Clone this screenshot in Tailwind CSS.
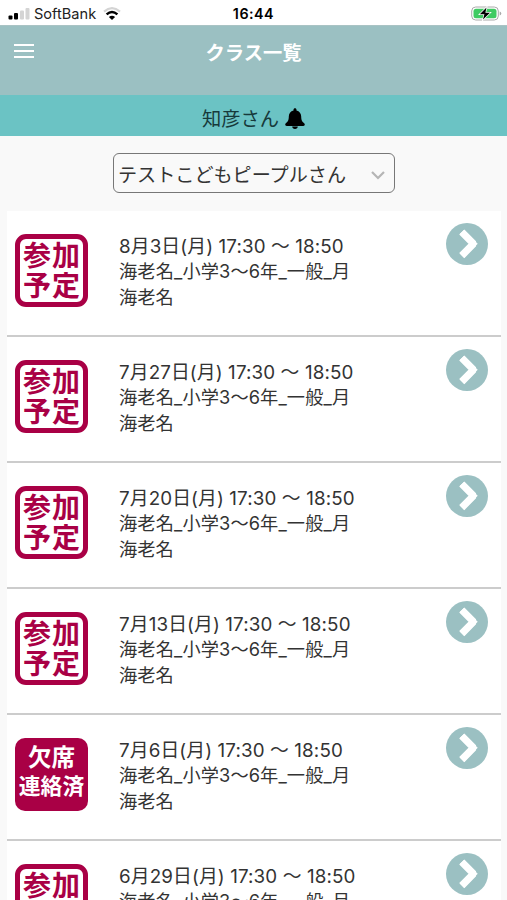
<!DOCTYPE html>
<html lang="ja">
<head>
    <meta charset="UTF-8">
    <meta name="viewport" content="width=device-width, initial-scale=1.0" />
    <title>クラス一覧</title>
    <script src="https://cdn.jsdelivr.net/npm/@tailwindcss/browser@4"></script>
</head>
<body class="h-[900px] overflow-hidden bg-[#f9f9f9] font-['Inter','Noto_Sans_CJK_JP',sans-serif] text-[#333]">
    <!-- Status bar -->
    <div class="grid h-[25px] grid-cols-3 items-center bg-white px-[7px] pt-[2px] text-black">
        <div class="flex items-center">
            <svg class="h-3 w-[22px] ml-px" viewBox="0 0 22 12">
                <rect x="0.5" y="7.5" width="4" height="4" rx="1" />
                <rect x="6" y="5" width="4" height="6.500" rx="1" />
                <rect x="12" y="2.500" width="4" height="9" rx="1" fill="#d4d4d4" />
                <rect x="17.500" y="0" width="4" height="11.500" rx="1" fill="#d4d4d4" />
            </svg>
            <span class="ml-[4px] text-[14.600px] leading-5 text-[#222]">SoftBank</span>
            <svg class="ml-[7px] h-[13px] w-[18px]" viewBox="0 0 18 13" fill="none">
                <path d="M1 4.600Q9-2.200 17 4.600" stroke="#d4d4d4" stroke-width="2.200" />
                <path d="M3.600 7.400Q9 2.600 14.400 7.400" stroke="#000" stroke-width="2.500" />
                <path d="M5.900 9.900Q9 7.400 12.100 9.900L9 13Z" fill="#000" />
            </svg>
        </div>
        <div class="text-center text-[14.300px] font-semibold leading-5 tracking-[0.5px]">16:44</div>
        <div class="flex justify-end">
            <svg class="-mr-[2px] h-[15px] w-[31px]" viewBox="0 0 31 15">
                <rect x="0.700" y="1" width="26.600" height="13" rx="4" fill="#fff" stroke="#aaa" />
                <rect x="2.500" y="2.800" width="23" height="9.400" rx="2.500" fill="#3fcb62" />
                <path d="M28.700 5.500v4q1.600-.6 1.600-2t-1.600-2z" fill="#aaa" />
                <path d="M15.500 1.500L8.800 8.300h4.600L12 13.500 19 6.700h-4.600z" fill="#000" stroke="#fff" stroke-width="1.500" paint-order="stroke" />
            </svg>
        </div>
    </div>

    <!-- Header -->
    <header class="grid h-[70px] grid-cols-3 items-start border-t border-[#a9c3c4] bg-[#9bc0c2] px-[14px] pt-[13px] text-white">
        <button type="button" aria-label="メニュー" class="mt-[5px] flex w-5 flex-col gap-1">
            <span class="h-[2px] w-5 bg-white"></span>
            <span class="h-[2px] w-5 bg-white"></span>
            <span class="h-[2px] w-5 bg-white"></span>
        </button>
        <h1 class="text-center text-[19.300px] font-bold leading-7">クラス一覧</h1>
    </header>
    <div class="flex h-[41px] items-center justify-center bg-[#6bc3c4] pt-[6px] text-[19.300px] text-[#173a3b]">
        <span class="pt-[2px]">知彦さん</span>
        <svg class="ml-[6px] h-[21px] w-5" viewBox="0 0 20 21" fill="#000">
            <path d="M10 0.300c.9 0 1.500.6 1.500 1.500v.6c3 .7 4.700 3 4.700 6.100 0 3.900 1.100 5.200 2.700 6.600.6.5.9.900.9 1.500 0 .9-.6 1.400-1.500 1.400H1.700c-.9 0-1.500-.5-1.500-1.400 0-.6.3-1 .9-1.500 1.600-1.400 2.700-2.700 2.700-6.600 0-3.100 1.700-5.400 4.700-6.100v-.6c0-.9.600-1.500 1.500-1.500zM7.200 18.600h5.600c0 1.500-1.200 2.400-2.800 2.400s-2.800-.9-2.800-2.400z" />
        </svg>
    </div>

    <!-- Child selector -->
    <div class="ml-[113px] mt-[17px] flex h-10 w-[282px] items-center justify-between rounded-md border border-[#777] pl-[4px] pr-[9px] text-[19.100px]">
        <span class="whitespace-nowrap pt-[4px]">テストこどもピープルさん</span>
        <svg class="mt-[5px] h-[9px] w-[14px]" viewBox="0 0 14 9" fill="none" stroke="#b5b5b5" stroke-width="2.200">
            <path d="M1 1l6 6 6-6" />
        </svg>
    </div>

    <ul id="classList" class="ml-[7px] mr-[6px] mt-[18px]"></ul>

    <script>
        const classes = [
            { date: '8月3日(月)', absent: false },
            { date: '7月27日(月)', absent: false },
            { date: '7月20日(月)', absent: false },
            { date: '7月13日(月)', absent: false },
            { date: '7月6日(月)', absent: true },
            { date: '6月29日(月)', absent: false },
        ];

        const joinStamp = `
            <div class="flex h-[73px] w-[73px] flex-col items-center justify-center rounded-[11px] border-[5px] border-[#a90045] bg-white text-[28px] font-bold leading-[30px] tracking-[1px] text-[#a90045]">
                <span class="-mr-px">参加</span><span class="-mr-px">予定</span>
            </div>`;

        const absentStamp = `
            <div class="flex h-[73px] w-[73px] flex-col items-center justify-center rounded-[10px] bg-[#a90045] pb-[5px] font-bold leading-[29px] text-white">
                <span class="text-[23.500px]">欠席</span><span class="text-[21.800px]">連絡済</span>
            </div>`;

        document.getElementById('classList').innerHTML = classes.map(item => `
            <li class="flex h-[126px] items-start border-b-2 border-[#ccc] bg-white pl-2 pr-[13px]">
                <div class="mt-[23px]">${item.absent ? absentStamp : joinStamp}</div>
                <div class="ml-[31px] mt-[22.500px] flex-1 whitespace-nowrap text-[18.200px] leading-[25.700px]">
                    <p class="text-[18.800px] tracking-[0.120px]">${item.date} 17:30 〜 18:50</p>
                    <p class="tracking-[0.130px]">海老名_小学3〜6年_一般_月</p>
                    <p>海老名</p>
                </div>
                <svg class="mt-[12px] h-[42px] w-[42px]" viewBox="0 0 42 42">
                    <circle cx="21" cy="21" r="21" fill="#9bc0c2" />
                    <path d="M15.800 9L27.500 20.800 15.800 32.600" fill="none" stroke="#fff" stroke-width="7.200" stroke-linejoin="bevel" />
                    <path d="M15.800 9L27.500 20.800 15.800 32.600" fill="none" stroke="#fff" stroke-width="6" />
                </svg>
            </li>`).join('');
    </script>
</body>
</html>
